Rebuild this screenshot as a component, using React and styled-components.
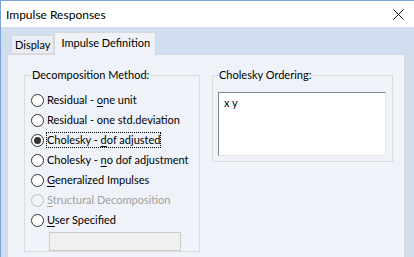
import React from "react";
import styled, { createGlobalStyle } from "styled-components";

const GlobalStyle = createGlobalStyle`
    html, body {
        margin: 0;
        padding: 0;
        background: #ffffff;
    }
    body {
        font-family: "Segoe UI", Lato, "Noto Sans", sans-serif;
        font-size: 11px;
        color: #000000;
    }
`;

const Window = styled.div`
    width: 414px;
    height: 257px;
    overflow: hidden;
    box-sizing: border-box;
    border-top: 1px solid #7aa3d6;
    border-left: 1px solid #7aa3d6;
    display: flex;
    flex-direction: column;
    background: #d1deef;
`;

const TitleBar = styled.div`
    height: 26px;
    flex: none;
    background: #ffffff;
    display: flex;
    align-items: center;
    justify-content: space-between;
    padding: 0 10px 0 5px;
`;

const Title = styled.span`
    font-size: 12px;
    line-height: 16px;
    padding-top: 1px;
`;

const Body = styled.div`
    flex: 1;
    padding: 4px 9px 0 6px;
    display: flex;
    flex-direction: column;
`;

const TabStrip = styled.div`
    display: flex;
    align-items: flex-end;
    height: 23px;
    padding-left: 4px;
    position: relative;
    z-index: 1;
`;

const Tab = styled.div`
    box-sizing: border-box;
    height: ${(p) => (p.$active ? "23px" : "19px")};
    padding: ${(p) => (p.$active ? "2px 5px 0 6px" : "1px 3px 0 3px")};
    margin-bottom: ${(p) => (p.$active ? "-1px" : "0")};
    border: 1px solid #d9d9d9;
    border-bottom: ${(p) => (p.$active ? "none" : "1px solid #d9d9d9")};
    background: ${(p) => (p.$active ? "#eff3f9" : "#eaeef4")};
    line-height: 16px;
    white-space: nowrap;
`;

const Panel = styled.div`
    flex: 1;
    background: #eff3f9;
    border: 1px solid #d9d9d9;
    border-bottom: none;
    padding: 12px 0 0 16px;
    display: flex;
    align-items: flex-start;
    gap: 12px;
`;

const Group = styled.fieldset`
    margin: 0;
    box-sizing: border-box;
    width: ${(p) => p.$width}px;
    border: 1px solid #dcdcdc;
    padding: ${(p) => p.$pad};
    min-width: 0;
`;

const Legend = styled.legend`
    padding: 0 1px;
    margin-left: 0;
    line-height: 16px;
    color: #000000;
`;

const Options = styled.div`
    display: flex;
    flex-direction: column;
    margin-top: 7px;
`;

const OptionRow = styled.div`
    height: 20px;
    display: flex;
    align-items: center;
    color: ${(p) => (p.$disabled ? "#a0a0a0" : "#000000")};
    white-space: nowrap;
`;

const Circle = styled.span`
    box-sizing: border-box;
    width: 13px;
    height: 13px;
    border-radius: 50%;
    border: 1px solid ${(p) => (p.$disabled ? "#bcbcbc" : "#333333")};
    background: ${(p) => (p.$disabled ? "#f0f3f8" : "#ffffff")};
    display: flex;
    align-items: center;
    justify-content: center;
    margin-right: 2px;
    flex: none;

    &::after {
        content: "";
        width: 7px;
        height: 7px;
        border-radius: 50%;
        background: #333333;
        display: ${(p) => (p.$checked ? "block" : "none")};
    }
`;

const OptionText = styled.span`
    line-height: 16px;
    padding: 0 1px;
    outline: ${(p) => (p.$focused ? "1px dotted #000000" : "none")};
    outline-offset: -1px;
`;

const Key = styled.u`
    text-decoration: underline;
    text-underline-offset: 2px;
`;

const SpecBox = styled.div`
    box-sizing: border-box;
    margin: 2px 0 0 18px;
    width: 132px;
    height: 19px;
    background: #f0f0f0;
    border: 1px solid #cccccc;
`;

const OrderBox = styled.div`
    box-sizing: border-box;
    margin-top: 9px;
    height: 64px;
    background: #ffffff;
    border-top: 1px solid #828790;
    border-left: 1px solid #828790;
    border-right: 1px solid #e3e3e3;
    border-bottom: 1px solid #e3e3e3;
    padding: 2px 5px;
    line-height: 16px;
`;

const CloseIcon = () => (
    <svg width="11" height="11" viewBox="0 0 11 11">
        <path d="M0.5 0.5 L10.5 10.5 M10.5 0.5 L0.5 10.5" stroke="#111111" strokeWidth="1" fill="none" />
    </svg>
);

const options = [
    { label: <>Residual - <Key>o</Key>ne unit</> },
    { label: <>Residual - one std.deviation</> },
    { label: <>Cholesky - <Key>d</Key>of adjusted</>, checked: true, focused: true },
    { label: <>Cholesky - <Key>n</Key>o dof adjustment</> },
    { label: <><Key>G</Key>eneralized Impulses</> },
    { label: <><Key>S</Key>tructural Decomposition</>, disabled: true },
    { label: <><Key>U</Key>ser Specified</> },
];

export default function App() {
    return (
        <>
            <GlobalStyle />
            <Window>
                <TitleBar>
                    <Title>Impulse Responses</Title>
                    <CloseIcon />
                </TitleBar>
                <Body>
                    <TabStrip>
                        <Tab>Display</Tab>
                        <Tab $active>Impulse Definition</Tab>
                    </TabStrip>
                    <Panel>
                        <Group $width={176} $pad="0 0 0 6px">
                            <Legend>Decomposition Method:</Legend>
                            <Options>
                                {options.map((o, i) => (
                                    <OptionRow key={i} $disabled={o.disabled}>
                                        <Circle $checked={o.checked} $disabled={o.disabled} />
                                        <OptionText $focused={o.focused}>{o.label}</OptionText>
                                    </OptionRow>
                                ))}
                            </Options>
                            <SpecBox />
                        </Group>
                        <Group $width={181} $pad="0 6px 5px 5px">
                            <Legend>Cholesky Ordering:</Legend>
                            <OrderBox>x y</OrderBox>
                        </Group>
                    </Panel>
                </Body>
            </Window>
        </>
    );
}
